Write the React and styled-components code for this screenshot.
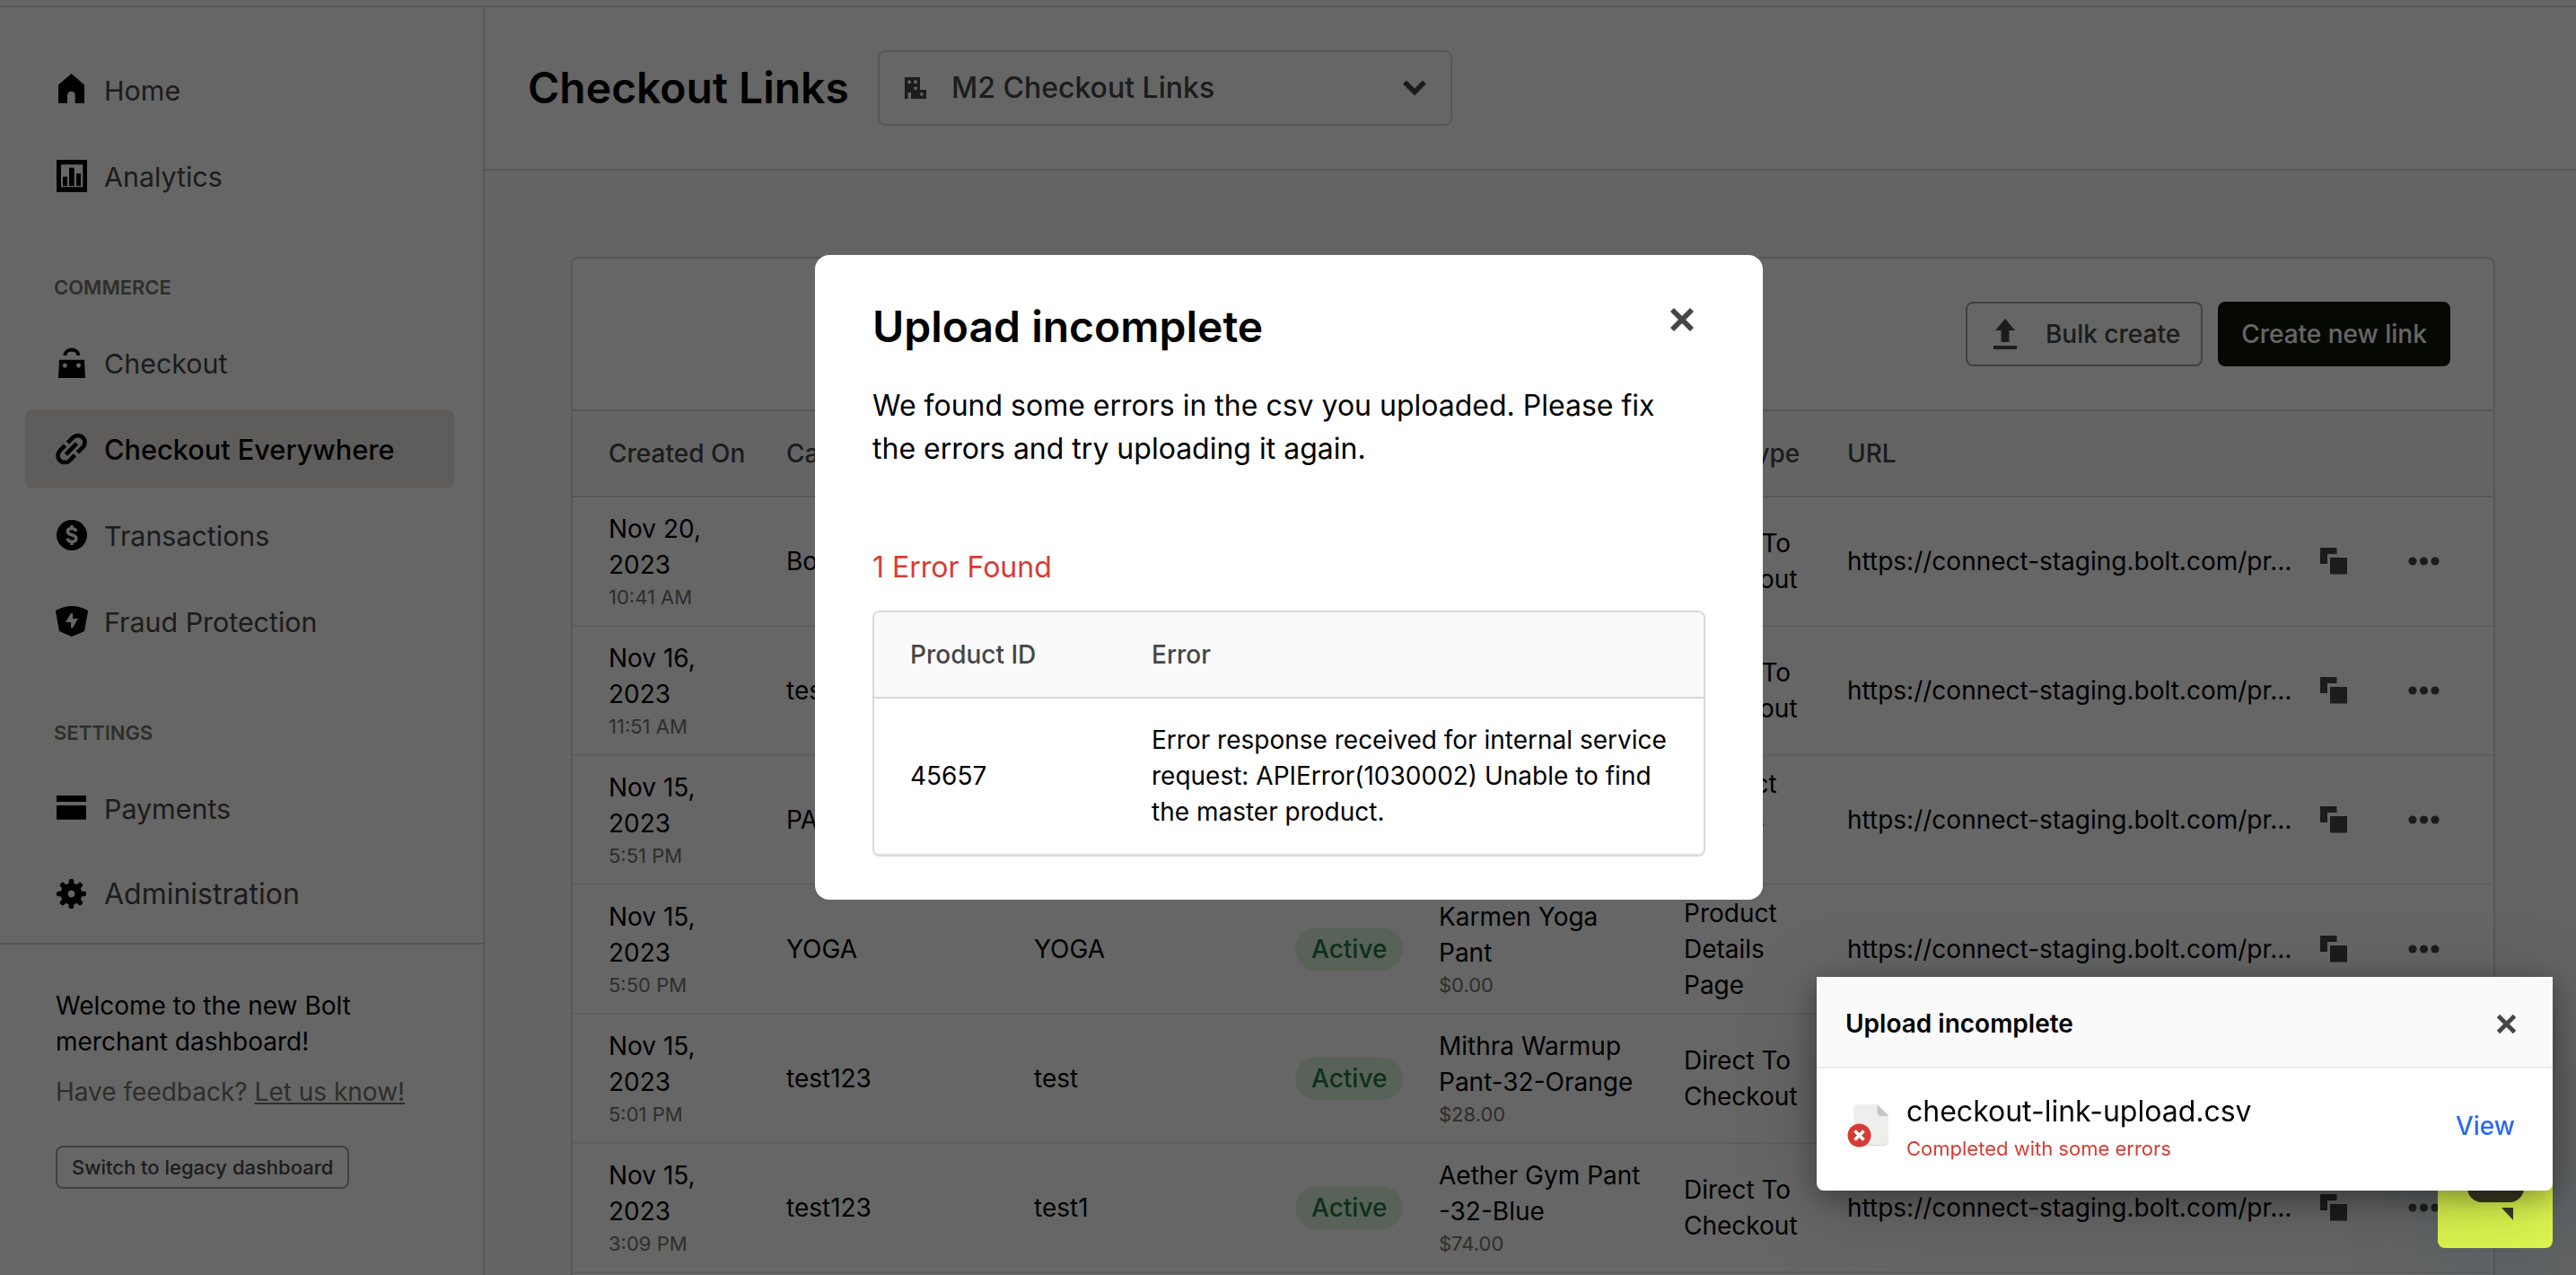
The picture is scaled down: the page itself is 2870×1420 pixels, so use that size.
import { useState } from 'react'
import styled, { createGlobalStyle, css } from 'styled-components'

const GlobalStyle = createGlobalStyle`
  * {
    box-sizing: border-box;
  }
  body {
    margin: 0;
    overflow: hidden;
    background: #ffffff;
    color: #000000;
    font-family: Inter, "Liberation Sans", sans-serif;
    font-size: 28px;
    line-height: 40px;
  }
  button {
    font-family: inherit;
    cursor: pointer;
  }
`;

/* ---------- layout ---------- */

const Page = styled.div`
  height: 1420px;
  padding-top: 6px;
  overflow: hidden;
`;

const Shell = styled.div`
  display: flex;
  height: 1600px;
  border-top: 2px solid #d9d9d9;
`;

const Sidebar = styled.aside`
  width: 540px;
  flex-shrink: 0;
  border-right: 2px solid #d9d9d9;
`;

const Main = styled.main`
  flex: 1;
  background: #fafafa;
`;

/* ---------- sidebar ---------- */

const Nav = styled.nav`
  height: 1044px;
  padding: 48px 32px 0 28px;
  border-bottom: 2px solid #d9d9d9;
`;

const NavGroup = styled.div`
  display: flex;
  flex-direction: column;
  gap: 8px;
  margin-bottom: 56px;
`;

const NavHeading = styled.h2`
  margin: 0 0 16px;
  padding-left: 32px;
  height: 40px;
  font-size: 22px;
  line-height: 48px;
  font-weight: 600;
  color: #73736a;
`;

const NavItem = styled.a`
  display: flex;
  align-items: center;
  gap: 18px;
  height: 88px;
  padding-left: 34px;
  border-radius: 8px;
  font-size: ${(props) => (props.$large ? '32px' : '30.4px')};
  color: #464646;
  white-space: nowrap;
  svg {
    color: #000000;
  }
  span {
    padding-top: ${(props) => (props.$large ? '0' : '2px')};
  }
  ${(props) => props.$active && css`
    background: #eae9e4;
    color: #000000;
    font-size: 30.7px;
    font-weight: 500;
  `}
`;

const Welcome = styled.div`
  padding: 48px 62px;
  p {
    margin: 0 0 16px;
  }
  p.muted {
    color: #73736a;
    white-space: nowrap;
  }
`;

const LegacyButton = styled.button`
  margin-top: 24px;
  height: 48px;
  padding: 0 16px;
  background: transparent;
  border: 2px solid #a0a0a0;
  border-radius: 8px;
  font-size: 22px;
  font-weight: 500;
  color: #464646;
`;

/* ---------- header ---------- */

const TopBar = styled.header`
  display: flex;
  align-items: center;
  gap: 32px;
  height: 182px;
  padding: 0 48px;
  background: #ffffff;
  border-bottom: 2px solid #d9d9d9;
  h1 {
    margin: 0;
    width: 358px;
    font-size: 48px;
    font-weight: 600;
    white-space: nowrap;
  }
`;

const StoreSelect = styled.div`
  display: flex;
  align-items: center;
  width: 640px;
  height: 84px;
  padding: 0 27px 0 28px;
  border: 2px solid #d9d9d9;
  border-radius: 8px;
  font-size: 32px;
  font-weight: 500;
  color: #464646;
  span {
    flex: 1;
    padding-left: 28px;
  }
`;

/* ---------- links table ---------- */

const Card = styled.section`
  margin: 96px 90px 0 96px;
  background: #ffffff;
  border: 2px solid #d9d9d9;
  border-radius: 8px;
`;

const Toolbar = styled.div`
  display: flex;
  justify-content: flex-end;
  gap: 17px;
  padding: 48px;
`;

const Button = styled.button`
  display: flex;
  align-items: center;
  justify-content: center;
  gap: 32px;
  width: ${(props) => (props.$primary ? '259px' : '264px')};
  height: 72px;
  padding: 0 0 0 ${(props) => (props.$primary ? '0' : '6px')};
  border-radius: 8px;
  border: 2px solid ${(props) => (props.$primary ? '#10160a' : '#a0a0a0')};
  background: ${(props) => (props.$primary ? '#10160a' : '#ffffff')};
  color: ${(props) => (props.$primary ? '#ffffff' : '#464646')};
  font-size: 28px;
  font-weight: 500;
`;

const Row = styled.div`
  display: grid;
  grid-template-columns: 198px 276px 291px 160px 273px 182px 522px 98px 1fr;
  align-items: center;
  height: 144px;
  padding: 0 24px 0 40px;
  border-bottom: 2px solid #ececea;
`;

const HeadRow = styled(Row)`
  height: 98px;
  background: #fafafa;
  border-top: 2px solid #d9d9d9;
  border-bottom-color: #d9d9d9;
  font-weight: 500;
  color: #464646;
`;

const Cell = styled.div`
  padding-right: 40px;
  white-space: ${(props) => (props.$nowrap ? 'nowrap' : 'normal')};
  small {
    display: block;
    font-size: 22px;
    line-height: 32px;
    color: #73736a;
  }
`;

const Badge = styled.span`
  display: inline-block;
  height: 48px;
  padding: 0 18px;
  border-radius: 24px;
  background: #def5de;
  color: #237a3c;
  font-weight: 500;
  line-height: 48px;
`;

const Actions = styled.div`
  display: flex;
  padding-left: 5px;
  color: #464646;
`;

/* ---------- modal ---------- */

const Overlay = styled.div`
  position: fixed;
  inset: 0;
  display: flex;
  align-items: flex-start;
  justify-content: center;
  padding: 284px 0 0 2px;
  background: rgba(0, 0, 0, 0.6);
`;

const Dialog = styled.div`
  width: 1056px;
  height: 718px;
  padding: 48px 64px;
  background: #ffffff;
  border-radius: 16px;
`;

const DialogHead = styled.div`
  display: flex;
  justify-content: space-between;
  height: 96px;
  h2 {
    margin: 0;
    font-size: 48px;
    line-height: 64px;
    font-weight: 600;
  }
`;

const CloseButton = styled.button`
  display: flex;
  align-items: center;
  height: 48px;
  padding: 0 12px;
  border: none;
  background: transparent;
  color: #464646;
`;

const DialogText = styled.p`
  margin: 0;
  font-size: 32px;
  line-height: 48px;
`;

const ErrorCount = styled(DialogText)`
  margin: 84px 0 24px;
  color: #d63c34;
`;

const ErrorTable = styled.div`
  border: 2px solid #d9d9d9;
  border-radius: 8px;
  overflow: hidden;
`;

const ErrorRow = styled.div`
  display: grid;
  grid-template-columns: 269px 1fr;
  align-items: center;
  padding: 26px 36px 26px 40px;
  border-bottom: 2px solid #ececea;
`;

const ErrorHead = styled(ErrorRow)`
  height: 96px;
  background: #fafafa;
  border-bottom-color: #d9d9d9;
  font-weight: 500;
  color: #464646;
`;

/* ---------- toast + chat ---------- */

const Toast = styled.div`
  position: fixed;
  right: 26px;
  bottom: 94px;
  width: 820px;
  height: 238px;
  background: #ffffff;
  border-radius: 0 0 8px 8px;
  box-shadow: 0 8px 32px rgba(0, 0, 0, 0.35), 0 16px 96px rgba(0, 0, 0, 0.2);
`;

const ToastHead = styled.div`
  display: flex;
  align-items: center;
  justify-content: space-between;
  height: 102px;
  padding: 4px 28px 0 32px;
  background: #fafafa;
  border-bottom: 2px solid #ececea;
  font-weight: 600;
`;

const ToastBody = styled.div`
  display: flex;
  align-items: center;
  height: 128px;
  padding: 0 42px 0 34px;
`;

const FileInfo = styled.div`
  flex: 1;
  padding: 9px 0 0 18px;
  font-size: 32px;
  small {
    display: block;
    font-size: 22px;
    line-height: 42px;
    color: #d63c34;
  }
`;

const ViewLink = styled.a`
  font-weight: 500;
  color: #2b6af3;
`;

const ChatLauncher = styled.div`
  position: fixed;
  right: 26px;
  bottom: 30px;
  width: 128px;
  height: 128px;
  background: #def74f;
  border-radius: 8px;
  box-shadow: 0 16px 100px rgba(50, 90, 110, 0.3);
`;

/* ---------- icons ---------- */

const NavIcon = ({ children }) => (
  <svg width="36" height="36" viewBox="0 0 36 36" fill="currentColor">{children}</svg>
)

const icons = {
  home: <path d="M17.5 0 32 12.5V33H21.7V24a4.3 4.3 0 0 0-8.7 0v9H3V12.5Z" />,
  analytics: (
    <>
      <path fillRule="evenodd" d="M1 0H35V36H1ZM6 5.3V30.3H30.3V5.3Z" />
      <path d="M8 18.7h5V29H8ZM15 8.7h5.7V29H15ZM23 15.3h5V29h-5Z" />
    </>
  ),
  checkout: (
    <>
      <path d="M10.2 9.7a7.7 7 0 0 1 15.3 0" fill="none" stroke="currentColor" strokeWidth="4" />
      <path fillRule="evenodd" d="M4 14.7H32L33 35H3ZM10.3 18.6a2.5 2.5 0 1 0 .01 0ZM25.5 18.6a2.5 2.5 0 1 0 .01 0Z" />
    </>
  ),
  link: (
    <g transform="rotate(-45 17.5 18)" fill="none" stroke="currentColor" strokeWidth="4.6">
      <path d="M15.4 10.25H7.2a7.75 7.75 0 0 0 0 15.5h8.2M19.6 10.25h8.2a7.75 7.75 0 0 1 0 15.5h-8.2M9 18h17" />
    </g>
  ),
  transactions: (
    <>
      <circle cx="18" cy="18" r="17" />
      <path d="M23 13.8c-.6-2-2.3-3.2-5-3.2-2.9 0-4.7 1.3-4.7 3.4 0 5 9.6 2.5 9.6 7.7 0 2.2-1.9 3.5-4.7 3.5-2.8 0-4.7-1.4-5.2-3.6M18 7v3.6M18 25.2V29" fill="none" stroke="#ffffff" strokeWidth="3.4" />
    </>
  ),
  fraud: (
    <path fillRule="evenodd" d="M-.2 6Q18-3.8 36.2 6L32 29 18 35 4 29ZM17 9 11 19h6v6h2.2L25 15h-6V9Z" />
  ),
  payments: <path d="M1 4H34V11H1ZM1 15H34V30.7H1Z" />,
  admin: (
    <>
      <path fillRule="evenodd" d="M17.5 5.5a12 12 0 1 0 .01 0ZM17.5 13.6a3.9 3.9 0 1 1-.01 0Z" />
      {[0, 45, 90, 135, 180, 225, 270, 315].map((a) => (
        <rect key={a} x="14.7" y="1" width="5.6" height="9" rx="2" transform={`rotate(${a} 17.5 17.5)`} />
      ))}
    </>
  ),
}

const BuildingIcon = () => (
  <svg width="24" height="24" viewBox="0 0 24 24" fill="currentColor">
    <path fillRule="evenodd" d="M0 0H17V14H24V24H7V17H3.5V24H0ZM3.5 3.6V7H6.8V3.6ZM10.3 3.6V7H13.7V3.6ZM10.3 10.7V14H13.7V10.7ZM17.3 17.2V20.6H20.6V17.2Z" />
  </svg>
)

const ChevronIcon = () => (
  <svg width="26" height="18" viewBox="0 0 26 18" fill="none" stroke="currentColor" strokeWidth="5.5">
    <path d="M2 2.5 13 13.5 24 2.5" />
  </svg>
)

const UploadIcon = () => (
  <svg width="26" height="34" viewBox="0 0 26 34" fill="currentColor">
    <path d="M13 0 24 13H17.5V26H8.5V13H2ZM0 30H26V34H0Z" />
  </svg>
)

const CopyIcon = () => (
  <svg width="30" height="30" viewBox="0 0 30 30" fill="currentColor">
    <path d="M0 0H18.5V7H8V18H0ZM11 11H30V29.5H11Z" />
  </svg>
)

const DotsIcon = () => (
  <svg width="35" height="10" viewBox="0 0 35 10" fill="currentColor">
    <circle cx="5" cy="5" r="4.6" />
    <circle cx="17.5" cy="5" r="4.6" />
    <circle cx="30" cy="5" r="4.6" />
  </svg>
)

const CloseIcon = ({ size }) => (
  <svg width={size} height={size} viewBox="0 0 28 28" fill="none" stroke="currentColor" strokeWidth="5.8">
    <path d="M3 3 25 25M25 3 3 25" />
  </svg>
)

const FileErrorIcon = () => (
  <svg width="48" height="50" viewBox="0 0 48 50">
    <path d="M12 1H33L46 14V42a5 5 0 0 1-5 5H12a5 5 0 0 1-5-5V6a5 5 0 0 1 5-5Z" fill="#d4d4d2" />
    <path d="M12 1H33L46 14V41a5 5 0 0 1-5 5H12a5 5 0 0 1-5-5V6a5 5 0 0 1 5-5Z" fill="#eeeeec" />
    <path d="M33.5 1 46.5 14H38a4.5 4.5 0 0 1-4.5-4.5Z" fill="#c6c6c4" />
    <circle cx="13.5" cy="35.5" r="13" fill="#d63c34" />
    <path d="M8.500 30.500 18.500 40.500M18.500 30.500 8.500 40.500" stroke="#ffffff" strokeWidth="3.600" />
  </svg>
)

const ChatIcon = () => (
  <svg width="128" height="128" viewBox="0 0 128 128" fill="#3b3a24">
    <path d="M49 30H80a16 16 0 0 1 16 16V61a16 16 0 0 1-16 16H49a16 16 0 0 1-16-16V46a16 16 0 0 1 16-16ZM71 83H84V97Z" />
  </svg>
)

/* ---------- data ---------- */

const navGroups = [
  { items: [['home', 'Home'], ['analytics', 'Analytics']] },
  {
    title: 'COMMERCE',
    items: [
      ['checkout', 'Checkout'],
      ['link', 'Checkout Everywhere'],
      ['transactions', 'Transactions'],
      ['fraud', 'Fraud Protection'],
    ],
  },
  { title: 'SETTINGS', items: [['payments', 'Payments'], ['admin', 'Administration']] },
]

const url = 'https://connect-staging.bolt.com/pr…'

const links = [
  { date: 'Nov 20, 2023', time: '10:41 AM', campaign: 'Bolt', type: 'Direct To Checkout' },
  { date: 'Nov 16, 2023', time: '11:51 AM', campaign: 'test', type: 'Direct To Checkout' },
  { date: 'Nov 15, 2023', time: '5:51 PM', campaign: 'PANT', type: 'Product Details Page' },
  { date: 'Nov 15, 2023', time: '5:50 PM', campaign: 'YOGA', name: 'YOGA', product: 'Karmen Yoga Pant', price: '$0.00', type: 'Product Details Page' },
  { date: 'Nov 15, 2023', time: '5:01 PM', campaign: 'test123', name: 'test', product: 'Mithra Warmup Pant-32-Orange', price: '$28.00', type: 'Direct To Checkout' },
  { date: 'Nov 15, 2023', time: '3:09 PM', campaign: 'test123', name: 'test1', product: 'Aether Gym Pant -32-Blue', price: '$74.00', type: 'Direct To Checkout' },
]

const LinkRow = ({ link }) => (
  <Row>
    <Cell>
      {link.date}
      <small>{link.time}</small>
    </Cell>
    <Cell>{link.campaign}</Cell>
    <Cell>{link.name}</Cell>
    <Cell $nowrap>{link.name && <Badge>Active</Badge>}</Cell>
    <Cell>
      {link.product}
      <small>{link.price}</small>
    </Cell>
    <Cell>{link.type}</Cell>
    <Cell $nowrap>{url}</Cell>
    <Actions><CopyIcon /></Actions>
    <Actions><DotsIcon /></Actions>
  </Row>
)

const App = () => {
  const [modalOpen, setModalOpen] = useState(true)
  const [toastOpen, setToastOpen] = useState(true)

  return (
    <>
      <GlobalStyle />
      <Page>
        <Shell>
          <Sidebar>
            <Nav>
              {navGroups.map((group, i) => (
                <NavGroup key={i}>
                  {group.title && <NavHeading>{group.title}</NavHeading>}
                  {group.items.map(([icon, label]) => (
                    <NavItem key={icon} $active={icon === 'link'} $large={icon === 'admin'}>
                      <NavIcon>{icons[icon]}</NavIcon>
                      <span>{label}</span>
                    </NavItem>
                  ))}
                </NavGroup>
              ))}
            </Nav>
            <Welcome>
              <p>Welcome to the new Bolt<br />merchant dashboard!</p>
              <p className="muted">Have feedback? <u>Let us know!</u></p>
              <LegacyButton>Switch to legacy dashboard</LegacyButton>
            </Welcome>
          </Sidebar>

          <Main>
            <TopBar>
              <h1>Checkout Links</h1>
              <StoreSelect>
                <BuildingIcon />
                <span>M2 Checkout Links</span>
                <ChevronIcon />
              </StoreSelect>
            </TopBar>
            <Card>
              <Toolbar>
                <Button><UploadIcon />Bulk create</Button>
                <Button $primary>Create new link</Button>
              </Toolbar>
              <HeadRow>
                <Cell $nowrap>Created On</Cell>
                <Cell>Campaign</Cell>
                <Cell />
                <Cell />
                <Cell />
                <Cell $nowrap>Link Type</Cell>
                <Cell>URL</Cell>
              </HeadRow>
              {links.map((link, i) => <LinkRow key={i} link={link} />)}
              <Row />
            </Card>
          </Main>
        </Shell>
      </Page>

      {modalOpen &&
        <Overlay>
          <Dialog>
            <DialogHead>
              <h2>Upload incomplete</h2>
              <CloseButton onClick={() => setModalOpen(false)}><CloseIcon size={28} /></CloseButton>
            </DialogHead>
            <DialogText>
              We found some errors in the csv you uploaded. Please fix the errors and try uploading it again.
            </DialogText>
            <ErrorCount>1 Error Found</ErrorCount>
            <ErrorTable>
              <ErrorHead>
                <div>Product ID</div>
                <div>Error</div>
              </ErrorHead>
              <ErrorRow>
                <div>45657</div>
                <div>Error response received for internal service request: APIError(1030002) Unable to find the master product.</div>
              </ErrorRow>
            </ErrorTable>
          </Dialog>
        </Overlay>
      }

      <ChatLauncher><ChatIcon /></ChatLauncher>

      {toastOpen &&
        <Toast>
          <ToastHead>
            Upload incomplete
            <CloseButton onClick={() => setToastOpen(false)}><CloseIcon size={23} /></CloseButton>
          </ToastHead>
          <ToastBody>
            <FileErrorIcon />
            <FileInfo>
              checkout-link-upload.csv
              <small>Completed with some errors</small>
            </FileInfo>
            <ViewLink>View</ViewLink>
          </ToastBody>
        </Toast>
      }
    </>
  )
}

export default App
